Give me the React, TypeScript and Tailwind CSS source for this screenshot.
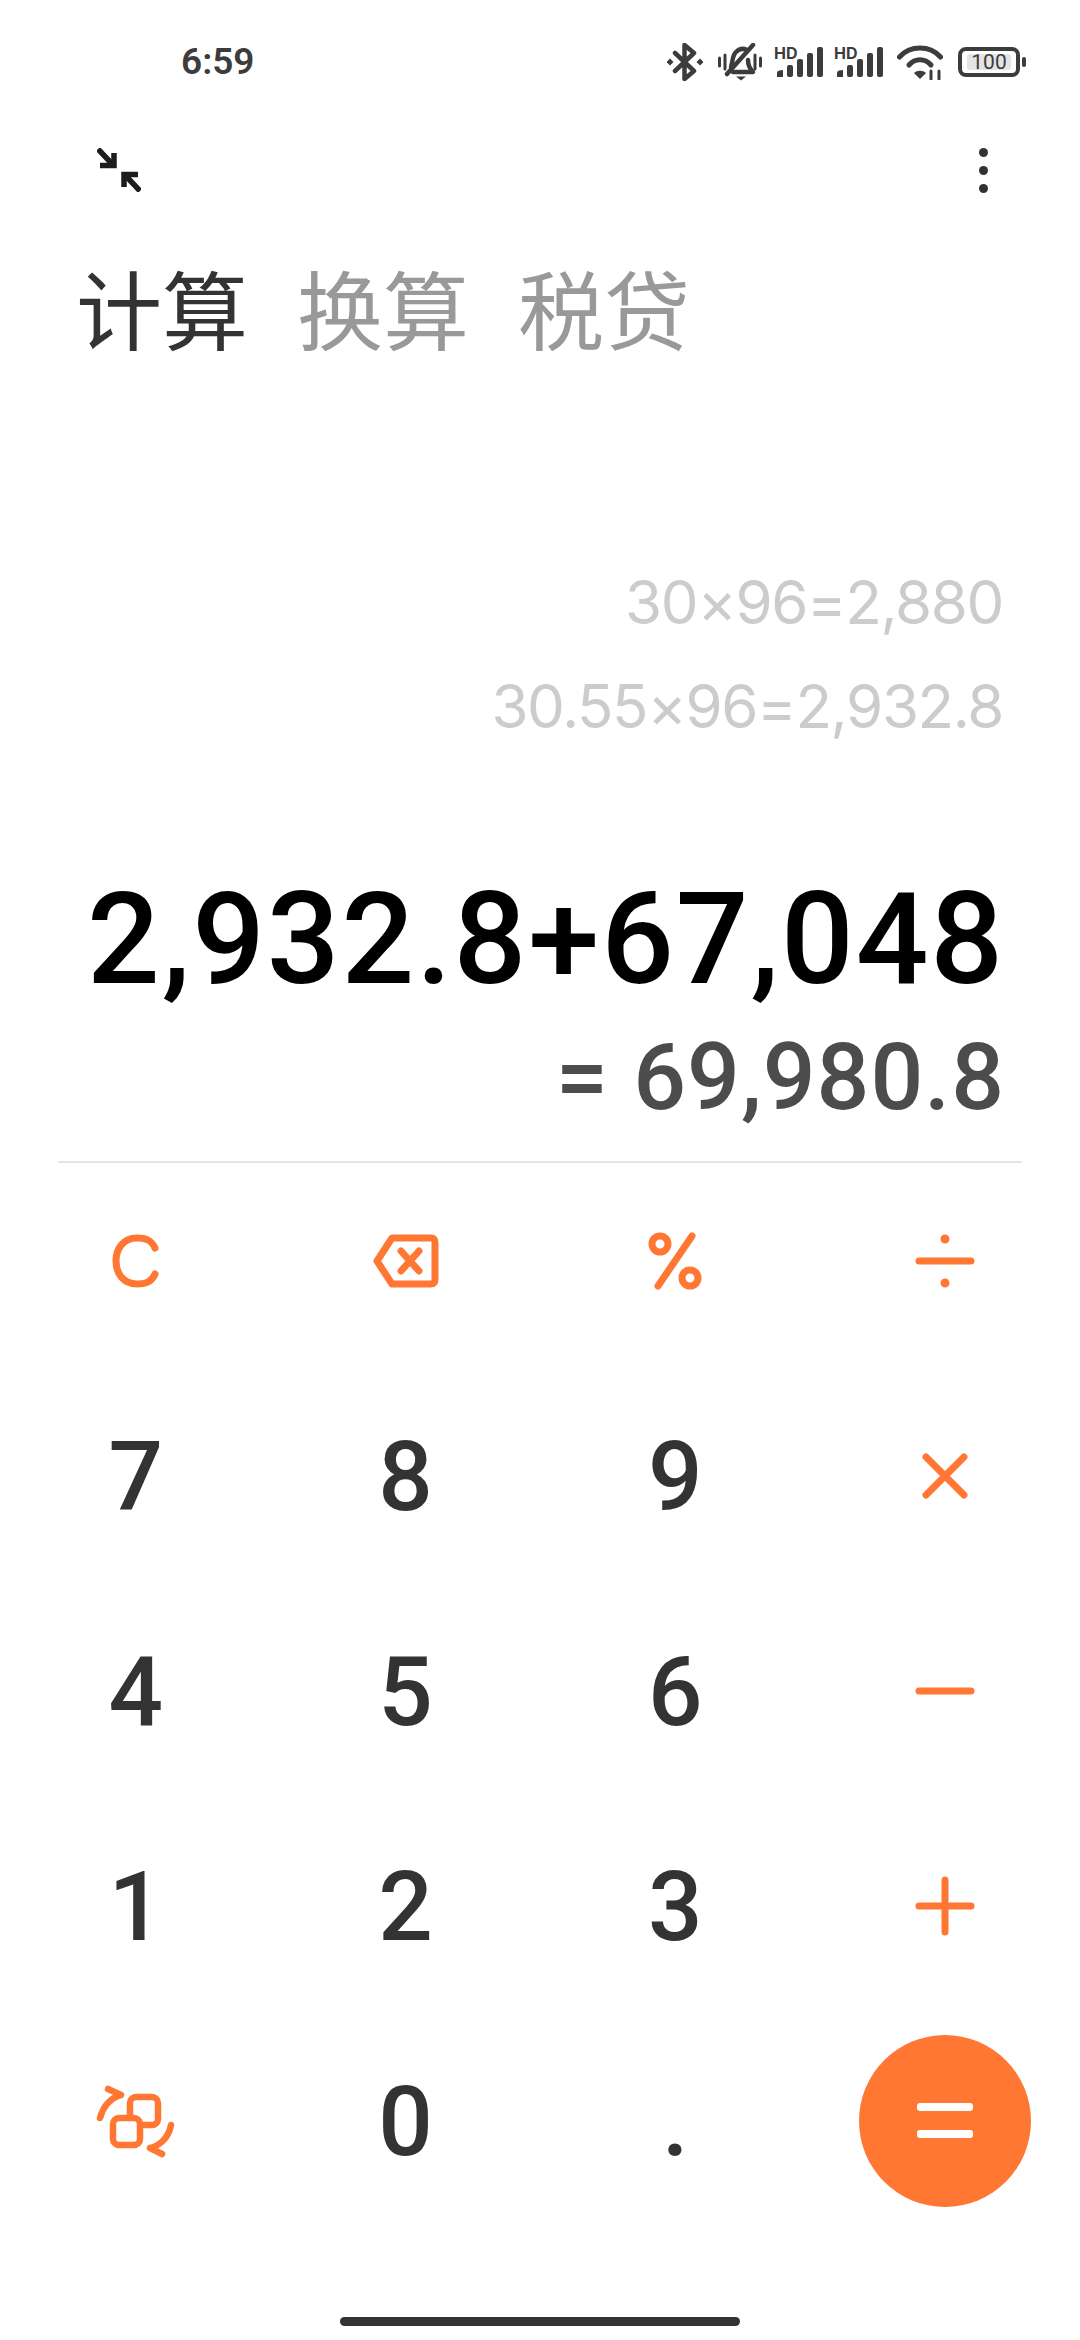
const O = "#ff7733";
const roboto = { fontFamily: "Roboto, sans-serif" };
const inter = { fontFamily: "Inter, sans-serif" };

function Signal() {
  return (
    <div className="relative h-[30px] w-[49px]">
      <span className="absolute left-0 top-[-2px] text-[16px] leading-[16px] font-bold text-[#3c3c3c]" style={inter}>HD</span>
      <svg viewBox="0 0 49 30" className="absolute inset-0 h-[30px] w-[49px]" fill="#3c3c3c">
        <path d="M3 30 V26 Q3 24 5 23.5 L9 23 V30 Z" />
        <rect x="13" y="18" width="6" height="12" rx="2" />
        <rect x="23" y="12" width="6" height="18" rx="2" />
        <rect x="33" y="6" width="6" height="24" rx="2" />
        <rect x="43" y="0" width="6" height="30" rx="2" />
      </svg>
    </div>
  );
}

function StatusBar() {
  return (
    <div className="flex h-[124px] items-center justify-between pl-[181px] pr-[54px]">
      <span className="text-[37px] font-semibold text-[#3c3c3c]" style={roboto}>6:59</span>
      <div className="flex items-center">
        <svg viewBox="0 0 36 38" className="mr-[15px] h-[38px] w-[36px]" fill="none" stroke="#3c3c3c" strokeWidth="4.5" strokeLinecap="round" strokeLinejoin="round">
          <path d="M8 10 L27 28 L17.5 36 L17.5 2 L27 10 L8 28" />
          <rect x="0.5" y="16.5" width="5" height="5" fill="#3c3c3c" stroke="none" transform="rotate(45 3 19)" />
          <rect x="30.5" y="16.5" width="5" height="5" fill="#3c3c3c" stroke="none" transform="rotate(45 33 19)" />
        </svg>
        <svg viewBox="0 0 44 38" className="mr-[12px] h-[38px] w-[44px]" fill="none" stroke="#3c3c3c" strokeWidth="4.5" strokeLinecap="round" strokeLinejoin="round">
          <path d="M1.5 15 V23 M7 12 V26 M42.5 15 V23 M37 12 V26" strokeWidth="3" />
          <path d="M13 24 C15 18 14 13 18 9 C21 6 25 5 29 7 M30 17 C30 23 32 26 35 29 H15" />
          <path d="M9 31 L35 2" />
          <path d="M18 33.5 H28 L23 37.5 Z" fill="#3c3c3c" stroke="none" />
        </svg>
        <div className="mr-[11px]"><Signal /></div>
        <div className="mr-[14px]"><Signal /></div>
        <svg viewBox="0 0 46 36" className="mr-[15px] h-[36px] w-[46px]" fill="none" stroke="#3c3c3c" strokeWidth="5" strokeLinecap="round">
          <path d="M2.5 13 C13 1 33 1 43.5 13" />
          <path d="M12 21 C18 14 28 14 34 21" />
          <path d="M17 29 L23 35 L29 29 C26 26 20 26 17 29 Z" fill="#3c3c3c" stroke="none" />
          <path d="M34 27 V35 M42 27 V35" strokeWidth="3" />
        </svg>
        <div className="flex items-center">
          <div className="flex h-[30px] w-[62px] items-center justify-center rounded-[8px] border-[4px] border-[#3c3c3c]">
            <span className="rounded-[3px] bg-[#e4e4e4] px-[4px] text-[21px] leading-[16px] text-[#3c3c3c]" style={roboto}>100</span>
          </div>
          <div className="ml-[2px] h-[10px] w-[4px] rounded-full bg-[#3c3c3c]" />
        </div>
      </div>
    </div>
  );
}

function Header() {
  return (
    <div className="flex h-[92px] items-center justify-between pl-[97px] pr-[92px]">
      <svg viewBox="0 0 44 44" className="h-[44px] w-[44px]" fill="none" stroke="#1c1c1c" strokeWidth="5.5">
        <path d="M1 1 L17 18" />
        <path d="M3 17.5 H17 V5" />
        <path d="M43 43 L27 26" />
        <path d="M41 26.5 H27 V39" />
      </svg>
      <div className="flex flex-col gap-[9px]">
        <div className="h-[9px] w-[9px] rounded-full bg-[#333333]" />
        <div className="h-[9px] w-[9px] rounded-full bg-[#333333]" />
        <div className="h-[9px] w-[9px] rounded-full bg-[#333333]" />
      </div>
    </div>
  );
}

function Tabs() {
  const cjk = { fontFamily: '"Noto Sans CJK SC", sans-serif' };
  return (
    <div className="mt-[41px] flex h-[100px] items-center gap-[49px] pl-[76px] text-[86px] leading-[100px]" style={cjk}>
      <span className="text-[#333333]">计算</span>
      <span className="text-[#999999]">换算</span>
      <span className="text-[#999999]">税贷</span>
    </div>
  );
}

function Display() {
  return (
    <div className="flex flex-col items-end pr-[75px]">
      <div className="mr-[2px] mt-[193px] text-[60px] leading-[104px] tracking-[-1.4px] text-[#cccccc]" style={inter}>30×96=2,880</div>
      <div className="mr-[2px] text-[60px] leading-[104px] tracking-[-1.4px] text-[#cccccc]" style={inter}>30.55×96=2,932.8</div>
      <div className="mt-[106px] whitespace-nowrap text-[128px] leading-[150px] font-medium tracking-[1.9px] text-black" style={roboto}>2,932.8+67,048</div>
      <div className="mt-[4px] text-[93px] leading-[120px] font-medium tracking-[1px] text-[#4c4c4c]" style={roboto}>= 69,980.8</div>
    </div>
  );
}

function Digit({ v }: { v: string }) {
  return <span className="pt-[3px] text-[96px] font-medium leading-none text-[#333333]" style={roboto}>{v}</span>;
}

function Stroke({ children }: { children: React.ReactNode }) {
  return (
    <svg viewBox="0 0 70 70" width={70} height={70} fill="none" stroke={O} strokeWidth="7" strokeLinecap="round" strokeLinejoin="round">
      {children}
    </svg>
  );
}

const Clear = (
  <Stroke>
    <path d="M54 22 C50 13 43 12 36 12 C22 12 15 23 15 35 C15 47 22 58 36 58 C43 58 50 57 54 48" />
  </Stroke>
);
const Back = (
  <Stroke>
    <path d="M21 12 H60 C63 12 64 14 64 17 V53 C64 56 63 58 60 58 H21 L6 35 Z" />
    <path d="M30 25 L48 45 M48 25 L30 45" />
  </Stroke>
);
const Percent = (
  <Stroke>
    <circle cx="20" cy="18" r="8" />
    <circle cx="50" cy="52" r="8" />
    <path d="M52 10 L18 60" />
  </Stroke>
);
const Divide = (
  <Stroke>
    <path d="M9 35 H61" />
    <path d="M35 13 V13.1 M35 57 V57.1" strokeWidth="9" />
  </Stroke>
);
const Times = (
  <Stroke>
    <path d="M16 16 L54 54 M54 16 L16 54" />
  </Stroke>
);
const Minus = (
  <Stroke>
    <path d="M9 35 H61" />
  </Stroke>
);
const Plus = (
  <Stroke>
    <path d="M9 35 H61 M35 9 V61" />
  </Stroke>
);
const Swap = (
  <svg viewBox="1 5 130 110" width="130" height="110" fill="none" stroke={O} strokeWidth="6.5" strokeLinecap="round" strokeLinejoin="round">
    <rect x="60" y="36" width="28" height="28" rx="6" />
    <rect x="43" y="57" width="27" height="27" rx="6" fill="#ffffff" />
    <path d="M30 57 C33 46 39 38 50 34" />
    <path d="M38 28 L51 34" />
    <path d="M101 64 C99 75 92 83 81 87" />
    <path d="M92 93 L80 87" />
  </svg>
);

function Keys() {
  const keys: React.ReactNode[] = [
    Clear, Back, Percent, Divide,
    <Digit v="7" />, <Digit v="8" />, <Digit v="9" />, Times,
    <Digit v="4" />, <Digit v="5" />, <Digit v="6" />, Minus,
    <Digit v="1" />, <Digit v="2" />, <Digit v="3" />, Plus,
    Swap, <Digit v="0" />, <Digit v="." />,
    <div className="flex h-[172px] w-[172px] flex-col items-center justify-center gap-[19px] rounded-full bg-[#ff7733]">
      <div className="h-[8px] w-[56px] rounded-[3px] bg-white" />
      <div className="h-[8px] w-[56px] rounded-[3px] bg-white" />
    </div>,
  ];
  return (
    <div className="-mt-[10px] grid auto-rows-[215px] grid-cols-4 pl-[1px]">
      {keys.map((k, i) => (
        <div key={i} className="flex items-center justify-center">{k}</div>
      ))}
    </div>
  );
}

export default function App() {
  return (
    <div className="relative h-[2340px] w-[1080px] overflow-hidden bg-white">
      <StatusBar />
      <Header />
      <Tabs />
      <Display />
      <div className="mx-[58px] mt-[23px] h-[2px] bg-[#e6e6e6]" />
      <Keys />
      <div className="absolute bottom-[14px] left-[340px] h-[9px] w-[400px] rounded-full bg-[#333333]" />
    </div>
  );
}
